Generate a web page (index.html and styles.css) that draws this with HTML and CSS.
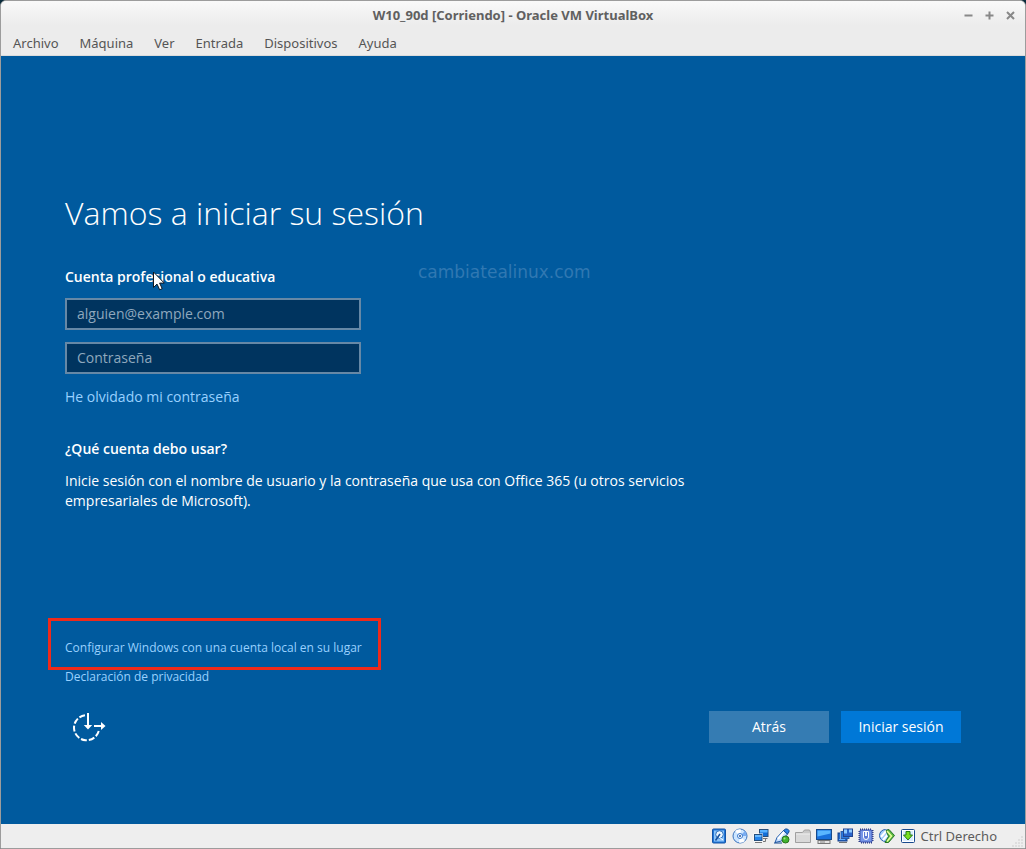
FILE: index.html
```html
<!DOCTYPE html>
<html lang="es">
<head>
<meta charset="utf-8">
<meta name="viewport" content="width=device-width, initial-scale=1">
<title>W10_90d [Corriendo] - Oracle VM VirtualBox</title>
<link rel="stylesheet" href="styles.css">
</head>
<body>
<div class="window">
  <header class="chrome">
    <div class="titlebar">
      <h1 class="title">W10_90d [Corriendo] - Oracle VM VirtualBox</h1>
      <div class="controls">
        <button class="control" type="button" aria-label="Minimizar"><svg width="9" height="9" viewBox="0 0 9 9"><path d="M0.500 4.500h8"/></svg></button>
        <button class="control" type="button" aria-label="Maximizar"><svg width="9" height="9" viewBox="0 0 9 9"><path d="M0.500 4.500h8M4.500 0.500v8"/></svg></button>
        <button class="control" type="button" aria-label="Cerrar"><svg width="9" height="9" viewBox="0 0 9 9"><path d="M1 1l7 7M8 1L1 8"/></svg></button>
      </div>
    </div>
    <nav class="menubar" aria-label="Menú">
      <button class="menu" type="button">Archivo</button>
      <button class="menu" type="button">Máquina</button>
      <button class="menu" type="button">Ver</button>
      <button class="menu" type="button">Entrada</button>
      <button class="menu" type="button">Dispositivos</button>
      <button class="menu" type="button">Ayuda</button>
    </nav>
  </header>

  <main class="screen">
    <form class="login">
      <h2 class="heading">Vamos a iniciar su sesión</h2>
      <h3 class="label">Cuenta profesional o educativa
        <svg class="pointer" width="15" height="21" viewBox="0 0 15 21" aria-hidden="true"><path d="M1.500 1v15.500l3.500-3.400 2.700 5.700 2.500-1.200-2.600-5.500h4.700z" fill="#fff" stroke="#101820" stroke-width="1"/></svg>
      </h3>
      <div class="fields">
        <input class="field" type="email" placeholder="alguien@example.com" aria-label="Correo">
        <input class="field" type="password" placeholder="Contraseña" aria-label="Contraseña">
      </div>
      <a class="link forgot" href="#">He olvidado mi contraseña</a>
      <h3 class="label question">¿Qué cuenta debo usar?</h3>
      <p class="help">Inicie sesión con el nombre de usuario y la contraseña que usa con Office 365 (u otros servicios empresariales de Microsoft).</p>
      <div class="links">
        <a class="link small highlighted" href="#">Configurar Windows con una cuenta local en su lugar</a>
        <a class="link small" href="#">Declaración de privacidad</a>
      </div>
      <div class="actions">
        <button class="ease" type="button" aria-label="Accesibilidad">
          <svg width="36" height="32" viewBox="0 0 36 32" fill="none" stroke="#fff" stroke-width="2">
            <path d="M14 4.200A12.600 12.600 0 1 0 28 19" stroke-dasharray="6 2"/>
            <path d="M17 2v13M23 15h9"/>
            <path d="M12.800 14h8.400L17 18.500zM30 11l4.500 4-4.500 4z" fill="#fff" stroke="none"/>
          </svg>
        </button>
        <button class="button back" type="button">Atrás</button>
        <button class="button submit" type="submit">Iniciar sesión</button>
      </div>
    </form>
    <span class="watermark">cambiatealinux.com</span>
  </main>

  <footer class="statusbar">
    <svg class="icon" viewBox="0 0 16 16" aria-label="Disco duro"><rect x="1.500" y="1" width="13" height="14" rx="1" fill="#2176d8" stroke="#1254a7"/><rect x="3" y="2.500" width="10" height="11" fill="#8bc4fa"/><circle cx="8.500" cy="6.500" r="3.800" fill="#e9f5ff" stroke="#2a70bf"/><path d="M9 6L4.500 12.500" stroke="#164f9c" stroke-width="1.500"/><path d="M8 9l4 3" stroke="#fff"/></svg>
    <svg class="icon" viewBox="0 0 16 16" aria-label="Disco óptico"><circle cx="8" cy="8" r="7" fill="#cce5ff" stroke="#3973bd"/><path d="M8 8L3 3A7 7 0 0 1 9 1.500zM8 8l5 5a7 7 0 0 1-6 1.500z" fill="#fff"/><path d="M8 8l5-5a7 7 0 0 1 1.500 5z" fill="#79adf2"/><circle cx="8" cy="8" r="2.500" fill="#fff" stroke="#397ad0"/><circle cx="8" cy="8" r="1" fill="#1d4f99"/></svg>
    <svg class="icon" viewBox="0 0 16 16" aria-label="Red"><rect x="6.500" y="1.500" width="8.500" height="7" fill="#126fd8" stroke="#274f7c"/><path d="M7 2h7.500v2.500H7z" fill="#58b2ff"/><path d="M8 10.500h6.500M12.500 11v2.500H10" fill="none" stroke="#777"/><rect x=".5" y="5.500" width="9.500" height="8" fill="#fff"/><rect x="1.500" y="6.500" width="7.500" height="6" fill="#2686ed" stroke="#274f7c"/><path d="M2 7h6.500v2H2z" fill="#69baff"/><path d="M2 14.500h7" stroke="#777"/></svg>
    <svg class="icon" viewBox="0 0 16 16" aria-label="USB"><path d="M1 14.500L3 9.500 9.500 2.500l4 3.500-6 7z" fill="#c5dfff" stroke="#245ca8"/><path d="M9.500 2.500l2-1.500h2l1.500 1.500V4l-1.500 2z" fill="#2c83e5" stroke="#174d94"/><path d="M4 11l6-7" stroke="#fff" stroke-width="2"/><path d="M0 15h8" stroke="#174d94"/><circle cx="11.500" cy="11.500" r="3.500" fill="#42b32f" stroke="#25721c"/><circle cx="10.500" cy="10.500" r="1" fill="#a2eb86"/></svg>
    <svg class="icon" viewBox="0 0 16 16" aria-label="Carpetas compartidas"><path d="M.5 14.500V4.500h7l2-2.500h5l1 2v10.500z" fill="#c8c8c8" stroke="#a0a0a0"/><path d="M1 6.500h14V14H1z" fill="#d9d9d9"/><path d="M1 6h14" stroke="#f5f5f5"/></svg>
    <svg class="icon" viewBox="0 0 16 16" aria-label="Pantalla"><rect x=".5" y="1.500" width="15" height="10" fill="#1970dc" stroke="#174b8b"/><path d="M1.500 2.500h13v3l-13 3z" fill="#5ab5ff"/><rect x="2" y="12.500" width="12" height="3" fill="#e3e3e3" stroke="#777"/><path d="M4 14h5" stroke="#888"/></svg>
    <svg class="icon" viewBox="0 0 16 16" aria-label="Grabación"><path d="M2 14.500h8" stroke="#777"/><rect x="1" y="5" width="9" height="8" fill="#2369cd" stroke="#173f86"/><rect x="3" y="3" width="10" height="8" fill="#fff"/><rect x="4" y="3.500" width="8" height="7" fill="#2b7be0" stroke="#2a5ba8"/><rect x="6.500" y="1" width="9" height="7.500" fill="#2a64cb" stroke="#21438d"/><path d="M7 1.500h3v4H7zM12 1.500h3v3h-3z" fill="#8dc9ff"/><path d="M2 11.500h6" stroke="#63adff"/></svg>
    <svg class="icon" viewBox="0 0 16 16" aria-label="Procesador"><rect x="2" y="2" width="12" height="12" fill="none" stroke="#29377e" stroke-width="3" stroke-dasharray="1 1"/><rect x="2" y="2" width="12" height="12" rx="1" fill="#7796e8" stroke="#3f54ae"/><path d="M5.500 3.500v5.500q0 2.500 2.500 2.500t2.500-2.500v-5.500z" fill="#5b78d6" stroke="#fff"/><path d="M8 4v4" stroke="#e8f1ff" stroke-width="2"/></svg>
    <svg class="icon" viewBox="0 0 16 16" aria-label="Ratón"><circle cx="6.500" cy="7.500" r="6" fill="#a2cefb" stroke="#2a60ad"/><path d="M2 9l6-7M4 12l7-8" stroke="#fff" stroke-width="2"/><path d="M7 2.500l3-1 5.500 6-6 7H6l3.500-6z" fill="#58b83e" stroke="#267429"/><path d="M8 3l4.500 5L8 13.500" fill="none" stroke="#e7ff9c" stroke-width="1.500"/></svg>
    <svg class="icon" viewBox="0 0 16 16" aria-label="Teclado"><rect x="1.500" y="1.500" width="13" height="13" rx="1" fill="#fff" stroke="#17498d"/><path d="M3 3h10v10H3z" fill="#d9edff"/><path d="M6 3.500h4V7h2.500L8 12 3.500 7H6z" fill="#79df20" stroke="#277b17"/></svg>
    <span class="hostkey">Ctrl Derecho</span>
    <svg class="grip" width="12" height="12" viewBox="0 0 12 12" aria-hidden="true"><path d="M9 1h2M6 4h2M9 4h2M3 7h2M6 7h2M9 7h2M0 10h2M3 10h2M6 10h2M9 10h2" stroke="#dedede" stroke-width="2"/></svg>
  </footer>
</div>
</body>
</html>
```
FILE: styles.css
```css
* {
  box-sizing: border-box;
}

body {
  margin: 0;
  background: #0b2c3c;
  font-family: "Noto Sans", sans-serif;
}

button {
  margin: 0;
  padding: 0;
  border: 0;
  background: none;
  font: inherit;
  color: inherit;
}

h1, h2, h3, p {
  margin: 0;
}

.window {
  display: flex;
  flex-direction: column;
  min-height: 100vh;
  border: 1px solid #9c9c9c;
  border-radius: 6px 6px 0 0;
  overflow: hidden;
  background: #eeeeee;
}

.chrome {
  background: linear-gradient(#f9f9f9, #ececec 24px);
  border-bottom: 1px solid #dcdcdc;
  color: #555555;
}

.titlebar {
  display: grid;
  grid-template-columns: 1fr auto 1fr;
  align-items: center;
  height: 28px;
  padding: 0 10px;
}

.title {
  grid-column: 2;
  font: 700 13px/20px "Noto Sans", sans-serif;
  color: #606060;
}

.controls {
  display: flex;
  justify-content: flex-end;
  gap: 12px;
}

.control {
  display: flex;
}

.control svg {
  fill: none;
  stroke: #888888;
  stroke-width: 2;
}

.menubar {
  display: flex;
  gap: 21px;
  height: 26px;
  padding-left: 12px;
  font-size: 13px;
  line-height: 28px;
}

.screen {
  position: relative;
  flex: 1;
  display: flex;
  background: #005a9e;
  color: #ffffff;
  font: 14px/20px "Open Sans", sans-serif;
}

.login {
  flex: 1;
  display: flex;
  flex-direction: column;
  align-items: flex-start;
  padding: 134px 64px 81px;
}

.heading {
  font-size: 32px;
  font-weight: 300;
  line-height: 46px;
}

.label {
  position: relative;
  margin-top: 31px;
  font-size: 14px;
  font-weight: 600;
}

.pointer {
  position: absolute;
  left: 87px;
  top: 4px;
}

.fields {
  display: flex;
  flex-direction: column;
  gap: 12px;
  width: 296px;
  margin-top: 11px;
}

.field {
  height: 32px;
  padding: 0 10px 2px;
  border: 2px solid #6688a6;
  border-radius: 0;
  background: #00345f;
  color: #ffffff;
  font: inherit;
}

.field::placeholder {
  color: #8fa8bd;
  opacity: 1;
}

.link {
  color: #99d1ff;
  text-decoration: none;
}

.forgot {
  margin-top: 13px;
}

.question {
  margin-top: 32px;
}

.help {
  max-width: 640px;
  margin-top: 12px;
}

.links {
  display: flex;
  flex-direction: column;
  align-items: flex-start;
  gap: 9px;
  margin-top: auto;
}

.small {
  font-size: 12px;
}

.highlighted {
  position: relative;
}

.highlighted::after {
  content: "";
  position: absolute;
  inset: -20px -19px -12px -17px;
  border: 3px solid #f02a1a;
}

.actions {
  display: flex;
  align-items: center;
  gap: 12px;
  align-self: stretch;
  margin-top: 24px;
}

.ease {
  display: flex;
  margin-left: 6px;
  margin-right: auto;
}

.button {
  width: 120px;
  height: 32px;
  background: #357cb3;
}

.submit {
  background: #0078d7;
}

.watermark {
  position: absolute;
  left: 417px;
  top: 205px;
  color: #3078b2;
  font: 17px/22px "DejaVu Sans", sans-serif;
}

.statusbar {
  display: flex;
  align-items: center;
  justify-content: flex-end;
  gap: 5px;
  height: 24px;
  padding-right: 1px;
  color: #5c5c5c;
  font-size: 13px;
}

.icon {
  width: 16px;
  height: 16px;
}

.hostkey {
  margin-right: 10px;
}

.grip {
  align-self: flex-end;
}
```
